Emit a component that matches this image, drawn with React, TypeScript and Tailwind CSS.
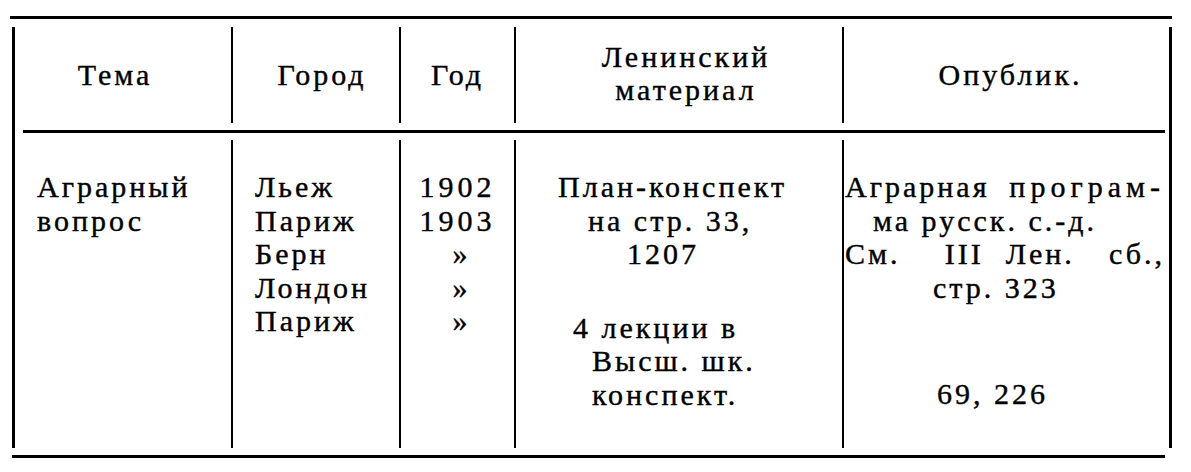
export default function App() {
  const cols = 'grid grid-cols-[216px_168px_115px_328px_327px]'

  return (
    <div className="w-[1191px] h-[472px] bg-white text-black pt-[16px] pl-[10px] font-['Liberation_Serif',serif] text-[30px] leading-[33.5px] tracking-[3px] [-webkit-text-stroke:0.4px_black]">
      {/* top rule */}
      <div className="w-[1162px] h-[3px] bg-black" />

      <div className="ml-[2px] mt-[8px] w-[1160px] border-x-[3px] border-black">
        {/* Header row */}
        <div className={`${cols} h-[96px]`}>
          <div className="flex items-center justify-center pr-[16px]">Тема</div>
          <div className="flex items-center justify-center pl-[12px] border-l-2 border-black">Город</div>
          <div className="flex items-center justify-center border-l-2 border-black">Год</div>
          <div className="flex flex-col items-center justify-center pl-[14px] pb-[4px] border-l-2 border-black">
            <span>Ленинский</span>
            <span>материал</span>
          </div>
          <div className="flex items-center justify-center pl-[8px] border-l-2 border-black">Опублик.</div>
        </div>

        {/* header separator */}
        <div className="py-[7px] pl-[8px] pr-[4px]">
          <div className="h-[3px] bg-black" />
        </div>

        {/* Body row */}
        <div className={`${cols} h-[308px]`}>
          <div className="pt-[30px] pl-[22px]">
            <div>Аграрный</div>
            <div>вопрос</div>
          </div>

          <div className="pt-[30px] pl-[22px] border-l-2 border-black">
            <div>Льеж</div>
            <div>Париж</div>
            <div>Берн</div>
            <div>Лондон</div>
            <div>Париж</div>
          </div>

          <div className="pt-[30px] text-center border-l-2 border-black">
            <div className="tracking-[4px]">1902</div>
            <div className="tracking-[4px]">1903</div>
            <div className="pl-[8px]">»</div>
            <div className="pl-[8px]">»</div>
            <div className="pl-[8px]">»</div>
          </div>

          <div className="pt-[30px] border-l-2 border-black">
            <div className="pl-[42px]">План-конспект</div>
            <div className="pl-[72px]">на стр. 33,</div>
            <div className="pl-[111px]">1207</div>
            <div className="pl-[57px] mt-[40px]">4 лекции в</div>
            <div className="pl-[76px]">Высш. шк.</div>
            <div className="pl-[76px]">конспект.</div>
          </div>

          <div className="pt-[30px] pr-[4px] border-l-2 border-black">
            <div className="flex justify-between pl-[1px]">
              <span>Аграрная</span>
              <span className="tracking-[5px]">програм-</span>
            </div>
            <div className="pl-[29px]">ма русск. с.-д.</div>
            <div className="flex justify-between pl-[1px]">
              <span>См.</span>
              <span className="flex gap-[22px] pl-[10px]">
                <span>III</span>
                <span>Лен.</span>
              </span>
              <span>сб.,</span>
            </div>
            <div className="pl-[89px]">стр. 323</div>
            <div className="pl-[93px] mt-[73px]">69, 226</div>
          </div>
        </div>
      </div>

      {/* bottom rule */}
      <div className="ml-[2px] mt-[7px] w-[1153px] h-[3px] bg-black" />
    </div>
  )
}
